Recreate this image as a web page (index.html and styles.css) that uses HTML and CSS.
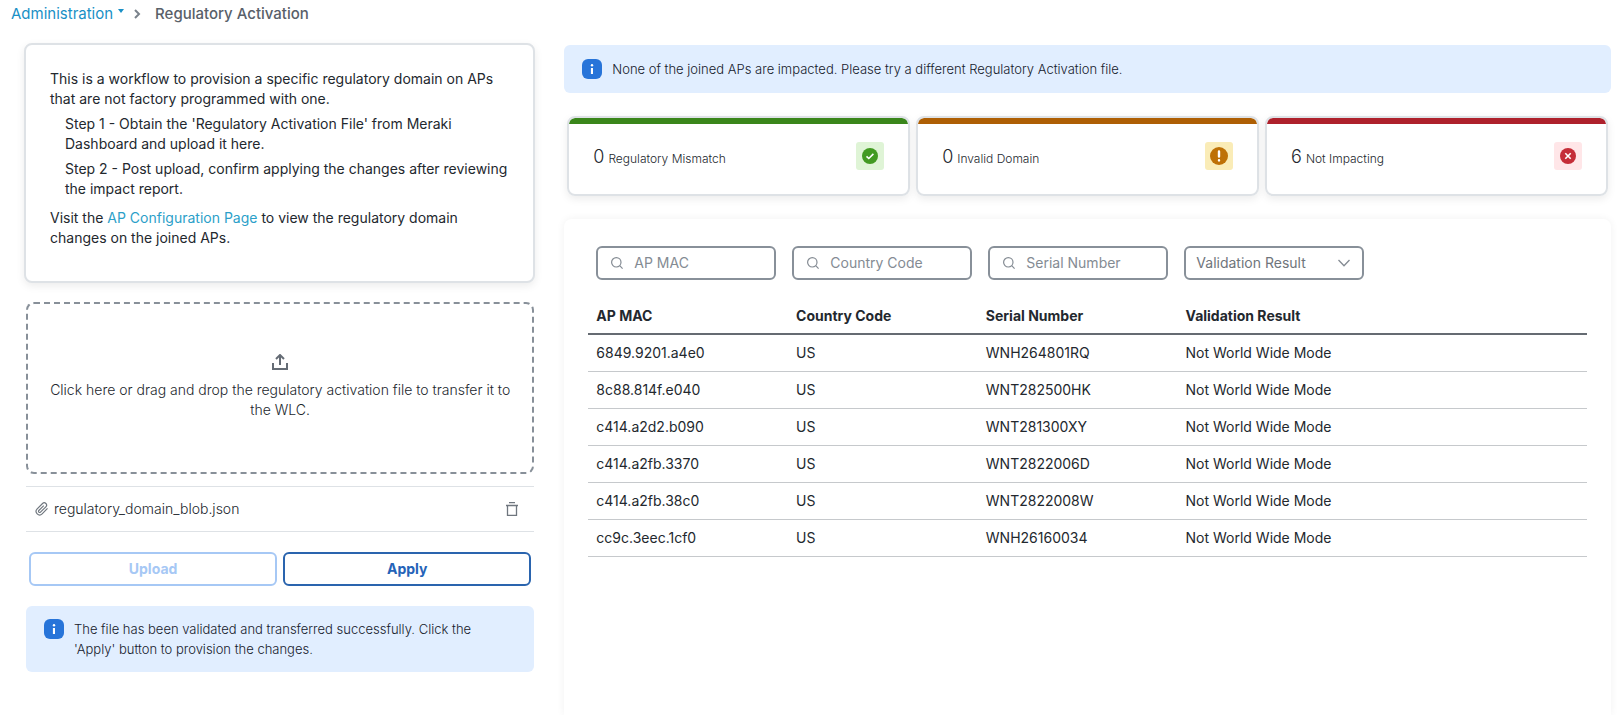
FILE: index.html
```html
<!DOCTYPE html>
<html lang="en">
<head>
<meta charset="utf-8">
<title>Regulatory Activation</title>
<link rel="stylesheet" href="styles.css">
</head>
<body>
<div class="page">
  <nav class="breadcrumb" aria-label="Breadcrumb">
    <a class="crumb-link" href="#">Administration<svg class="caret" viewBox="0 0 6 4" aria-hidden="true"><path d="M0 0h6L3 4z"/></svg></a>
    <svg class="crumb-sep" viewBox="0 0 8 10" aria-hidden="true"><path d="M2 1l4 4-4 4"/></svg>
    <span class="crumb-current">Regulatory Activation</span>
  </nav>

  <main class="columns">
    <section class="left">
      <div class="card intro">
        <p>This is a workflow to provision a specific regulatory domain on APs that are not factory programmed with one.</p>
        <p class="step">Step 1 - Obtain the 'Regulatory Activation File' from Meraki Dashboard and upload it here.</p>
        <p class="step">Step 2 - Post upload, confirm applying the changes after reviewing the impact report.</p>
        <p class="visit">Visit the <a href="#">AP Configuration Page</a> to view the regulatory domain changes on the joined APs.</p>
      </div>

      <div class="transfer">
        <button class="dropzone" type="button">
          <svg class="upload-icon" viewBox="0 0 16 16" aria-hidden="true"><path d="M1 9v6h14V9M8 11V1M4 5l4-4 4 4"/></svg>
          <span>Click here or drag and drop the regulatory activation file to transfer it to the WLC.</span>
        </button>

        <div class="file-row">
          <svg class="clip-icon" viewBox="0 0 24 24" aria-hidden="true"><path d="M21.440 11.050l-9.190 9.190a6 6 0 0 1-8.490-8.490l9.190-9.190a4 4 0 0 1 5.660 5.660l-9.200 9.190a2 2 0 0 1-2.830-2.830l8.490-8.480"/></svg>
          <span class="file-name">regulatory_domain_blob.json</span>
          <button class="delete" type="button" aria-label="Delete file"><svg viewBox="0 0 14 14" aria-hidden="true"><path d="M4 .7h6M1 3.500h12M2.500 3.500v9.800h9V3.500"/></svg></button>
        </div>

        <div class="actions">
          <button class="btn" type="button" disabled>Upload</button>
          <button class="btn" type="button">Apply</button>
        </div>

        <div class="alert" role="status">
          <svg class="info-icon" viewBox="0 0 20 20" aria-hidden="true"><rect width="20" height="20" rx="6"/><circle cx="10" cy="6.200" r="1.200"/><path d="M8.900 9h2.100v6H8.900z"/></svg>
          <p>The file has been validated and transferred successfully. Click the 'Apply' button to provision the changes.</p>
        </div>
      </div>
    </section>

    <section class="right">
      <div class="alert" role="status">
        <svg class="info-icon" viewBox="0 0 20 20" aria-hidden="true"><rect width="20" height="20" rx="6"/><circle cx="10" cy="6.200" r="1.200"/><path d="M8.900 9h2.100v6H8.900z"/></svg>
        <p>None of the joined APs are impacted. Please try a different Regulatory Activation file.</p>
      </div>

      <div class="stats">
        <div class="card stat ok">
          <p><span class="count">0</span> <span class="stat-label">Regulatory Mismatch</span></p>
          <span class="badge"><svg viewBox="0 0 16 16" aria-hidden="true"><circle cx="8" cy="8" r="8"/><path d="M4.500 8.300l2.300 2.200 4.600-4.600"/></svg></span>
        </div>
        <div class="card stat warn">
          <p><span class="count">0</span> <span class="stat-label">Invalid Domain</span></p>
          <span class="badge"><svg viewBox="0 0 18 18" aria-hidden="true"><circle cx="9" cy="9" r="9"/><path d="M9 4.500v5M9 13.200v.2" stroke-linecap="round"/></svg></span>
        </div>
        <div class="card stat bad">
          <p><span class="count">6</span> <span class="stat-label">Not Impacting</span></p>
          <span class="badge"><svg viewBox="0 0 16 16" aria-hidden="true"><circle cx="8" cy="8" r="8"/><path d="M5.300 5.300l5.400 5.400M10.700 5.300l-5.400 5.400"/></svg></span>
        </div>
      </div>

      <div class="panel">
        <div class="filters">
          <label class="field"><svg class="search-icon" viewBox="0 0 12 12" aria-hidden="true"><circle cx="5.300" cy="5.300" r="4.700"/><path d="M8.700 8.700l2.900 2.900"/></svg><input type="text" placeholder="AP MAC" aria-label="AP MAC"></label>
          <label class="field"><svg class="search-icon" viewBox="0 0 12 12" aria-hidden="true"><circle cx="5.300" cy="5.300" r="4.700"/><path d="M8.700 8.700l2.900 2.900"/></svg><input type="text" placeholder="Country Code" aria-label="Country Code"></label>
          <label class="field"><svg class="search-icon" viewBox="0 0 12 12" aria-hidden="true"><circle cx="5.300" cy="5.300" r="4.700"/><path d="M8.700 8.700l2.900 2.900"/></svg><input type="text" placeholder="Serial Number" aria-label="Serial Number"></label>
          <label class="field field-select"><select aria-label="Validation Result"><option>Validation Result</option></select><svg class="chevron" viewBox="0 0 12 8" aria-hidden="true"><path d="M.5 1L6 6.800 11.500 1"/></svg></label>
        </div>

        <table>
          <colgroup><col class="c-mac"><col class="c-country"><col class="c-serial"><col></colgroup>
          <thead><tr><th scope="col">AP MAC</th><th scope="col">Country Code</th><th scope="col">Serial Number</th><th scope="col">Validation Result</th></tr></thead>
          <tbody>
            <tr><td>6849.9201.a4e0</td><td>US</td><td>WNH264801RQ</td><td>Not World Wide Mode</td></tr>
            <tr><td>8c88.814f.e040</td><td>US</td><td>WNT282500HK</td><td>Not World Wide Mode</td></tr>
            <tr><td>c414.a2d2.b090</td><td>US</td><td>WNT281300XY</td><td>Not World Wide Mode</td></tr>
            <tr><td>c414.a2fb.3370</td><td>US</td><td>WNT2822006D</td><td>Not World Wide Mode</td></tr>
            <tr><td>c414.a2fb.38c0</td><td>US</td><td>WNT2822008W</td><td>Not World Wide Mode</td></tr>
            <tr><td>cc9c.3eec.1cf0</td><td>US</td><td>WNH26160034</td><td>Not World Wide Mode</td></tr>
          </tbody>
        </table>
      </div>
    </section>
  </main>
</div>
</body>
</html>
```
FILE: styles.css
```css
* { box-sizing: border-box; }

body {
  margin: 0;
  background: #fff;
  color: #23282e;
  font: 14px/20px Inter, "Liberation Sans", sans-serif;
}

p { margin: 0; }
svg { display: block; flex: none; fill: none; }
button, input, select { font: inherit; color: inherit; }

.page { min-height: 100vh; display: flex; flex-direction: column; }

.breadcrumb {
  display: flex;
  align-items: center;
  padding: 4px 11px;
  font-size: 15px;
  color: #596069;
}
.crumb-link { display: flex; gap: 5px; color: #1990c6; text-decoration: none; }
.caret { width: 6px; height: 4px; margin-top: 5px; fill: #1990c6; }
.crumb-sep { width: 8px; height: 10px; margin: 0 14px 0 9px; stroke: #7a828b; stroke-width: 2; }
.crumb-current { font-weight: 500; }

.columns { flex: 1; display: grid; grid-template-columns: 1fr 2fr; }
.left { padding: 15px 5px 24px 24px; }
.right { display: flex; flex-direction: column; padding: 17px 10px 0 24px; min-width: 0; }

.card {
  background: #fff;
  border: 2px solid #dee2e6;
  border-radius: 8px;
  box-shadow: 0 3px 8px rgba(0, 0, 0, .08);
}

.intro { padding: 24px 24px 33px; }
.intro a { color: #2c9fc9; text-decoration: none; }
.step { margin-top: 5px; padding-left: 15px; }
.visit { margin-top: 9px; }

.transfer { margin: 19px 1px 0 2px; }
.dropzone {
  display: flex;
  flex-direction: column;
  align-items: center;
  justify-content: center;
  gap: 10px;
  width: 100%;
  min-height: 172px;
  padding: 0 16px 3px;
  background: #fff;
  border: 2px dashed #889099;
  border-radius: 8px;
  font-weight: 300;
  cursor: pointer;
}
.upload-icon { width: 16px; height: 16px; stroke: #656c75; stroke-width: 2; }

.file-row {
  display: flex;
  align-items: center;
  gap: 5px;
  margin-top: 12px;
  padding: 12px 15px 12px 9px;
  border: solid #dee2e6;
  border-width: 1px 0;
}
.clip-icon { width: 14px; height: 14px; stroke: #6f767e; stroke-width: 2; }
.file-name { flex: 1; font-weight: 300; }
.delete { padding: 0; border: 0; background: none; cursor: pointer; }
.delete svg { width: 14px; height: 14px; stroke: #6f767e; stroke-width: 1.300; }

.actions { display: grid; grid-template-columns: 1fr 1fr; gap: 6px; margin: 20px 3px; }
.btn {
  padding: 5px 16px;
  background: #fff;
  border: 2px solid #2a64ae;
  border-radius: 6px;
  color: #2563b8;
  font-weight: 700;
}
.btn:disabled { border-color: #a6c8f5; color: #a6c8f5; }

.alert {
  display: flex;
  gap: 10px;
  padding: 14px 18px;
  background: #e1eeff;
  border-radius: 6px;
  color: #16202c;
  font-size: 13px;
  font-weight: 300;
}
.left .alert { padding: 13px 48px 13px 18px; }
.info-icon { width: 20px; height: 20px; fill: #fff; }
.info-icon rect { fill: #2774d9; }

.stats { display: grid; grid-template-columns: repeat(3, 1fr); gap: 6px; margin: 23px 3px; }
.stat {
  --strip: #3a861b;
  display: flex;
  align-items: center;
  justify-content: space-between;
  min-height: 80px;
  padding: 0 24px;
  background: linear-gradient(var(--strip) 6px, #fff 6px) padding-box;
}
.stat p { padding-top: 3px; }
.warn { --strip: #ae5f04; }
.bad { --strip: #ae212c; }
.count { font-size: 18px; font-weight: 300; }
.stat-label { font-size: 12px; font-weight: 300; }
.badge { display: grid; place-items: center; width: 28px; height: 28px; border-radius: 3px; }
.badge svg { width: 16px; height: 16px; stroke: #fff; stroke-width: 1.600; }
.badge circle { stroke: none; }
.ok .badge { background: #dff4d6; }
.ok circle { fill: #429a22; }
.warn .badge { background: #faecb7; }
.warn .badge svg { width: 18px; height: 18px; stroke-width: 2.400; }
.warn circle { fill: #be7106; }
.bad .badge { background: #ffe6e8; }
.bad circle { fill: #c52d38; }

.panel {
  flex: 1;
  padding: 27px 24px 24px;
  border-radius: 8px 8px 0 0;
  box-shadow: 0 0 8px rgba(0, 0, 0, .06);
}
.filters { display: flex; flex-wrap: wrap; gap: 16px; padding: 0 8px; }
.field {
  display: flex;
  align-items: center;
  gap: 11px;
  width: 180px;
  height: 34px;
  padding: 0 13px;
  border: 2px solid #889099;
  border-radius: 6px;
}
.field-select { padding: 0 12px 0 10px; }
.field input, .field select {
  flex: 1;
  min-width: 0;
  padding: 0;
  border: 0;
  outline: 0;
  background: none;
  color: #6f757b;
  appearance: none;
}
.field input::placeholder { color: #848b93; opacity: 1; }
.search-icon { width: 12px; height: 12px; stroke: #848b93; stroke-width: 1.200; }
.chevron { width: 12px; height: 8px; stroke: #848b93; stroke-width: 1.300; }

table { width: 100%; margin-top: 18px; border-collapse: collapse; table-layout: fixed; }
.c-mac, .c-serial { width: 20%; }
.c-country { width: 19%; }
th, td { padding: 8px; text-align: left; border-bottom: 1px solid #c6c9cc; }
th { padding-bottom: 7px; border-bottom: 2px solid #656b72; font-weight: 700; }
```
